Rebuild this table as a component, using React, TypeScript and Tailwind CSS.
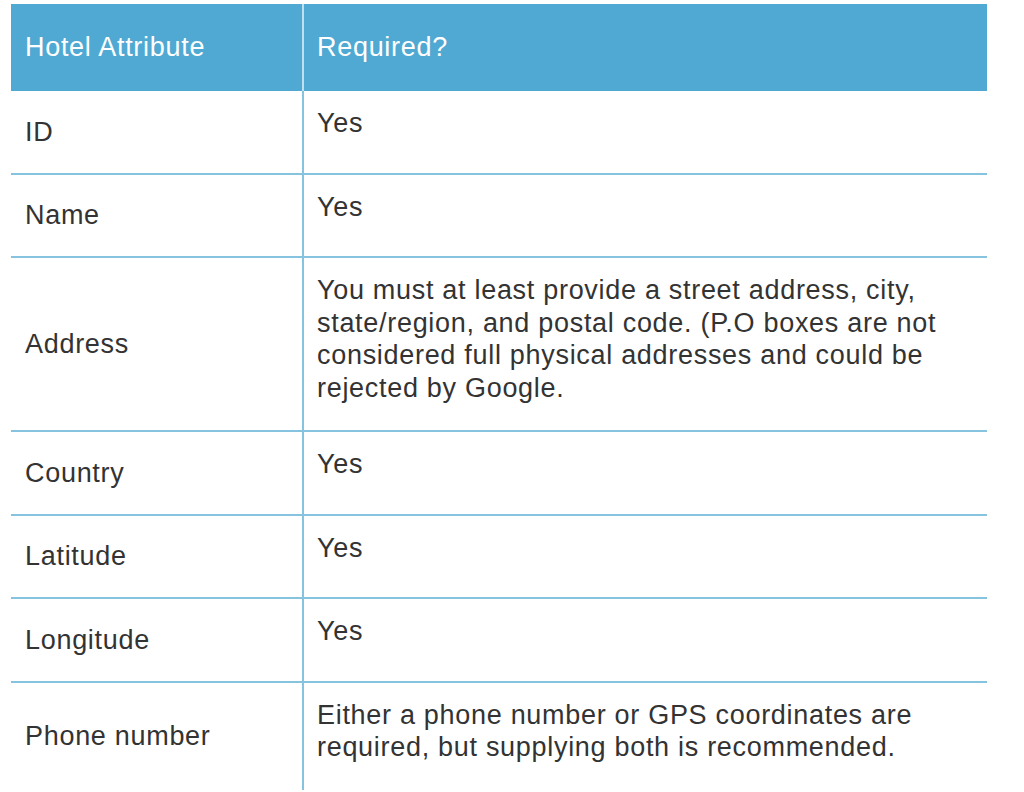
const rows: { attr: string; req: string }[] = [
  { attr: "ID", req: "Yes" },
  { attr: "Name", req: "Yes" },
  {
    attr: "Address",
    req: "You must at least provide a street address, city, state/region, and postal code. (P.O boxes are not considered full physical addresses and could be rejected by Google.",
  },
  { attr: "Country", req: "Yes" },
  { attr: "Latitude", req: "Yes" },
  { attr: "Longitude", req: "Yes" },
  {
    attr: "Phone number",
    req: "Either a phone number or GPS coordinates are required, but supplying both is recommended.",
  },
];

export default function App() {
  return (
    <div
      className="w-[1024px] h-[792px] bg-white overflow-hidden pt-[4px] pl-[11px] tracking-[0.7px]"
      style={{ fontFamily: '"Liberation Sans", Arial, sans-serif' }}
    >
      <div className="w-[976px]">
        <div className="flex h-[87px] bg-[#4fa9d2] text-white text-[27px]">
          <div className="w-[293px] flex items-center pl-[14px] border-r-2 border-[#bfe0ef]">
            Hotel Attribute
          </div>
          <div className="flex-1 flex items-center pl-[13px]">Required?</div>
        </div>
        {rows.map((r, i) => (
          <div
            key={r.attr}
            className={
              "flex min-h-[83.5px] text-[#333333] text-[27px] leading-[32.5px] " +
              (i < rows.length - 1 ? "border-b-2 border-[#86c3de]" : "")
            }
          >
            <div className="w-[293px] shrink-0 flex items-center pl-[14px] border-r-2 border-[#86c3de]">
              {r.attr}
            </div>
            <div className="flex-1 pl-[13px] pr-[40px] pt-[16px] pb-[26px]">{r.req}</div>
          </div>
        ))}
      </div>
    </div>
  );
}
